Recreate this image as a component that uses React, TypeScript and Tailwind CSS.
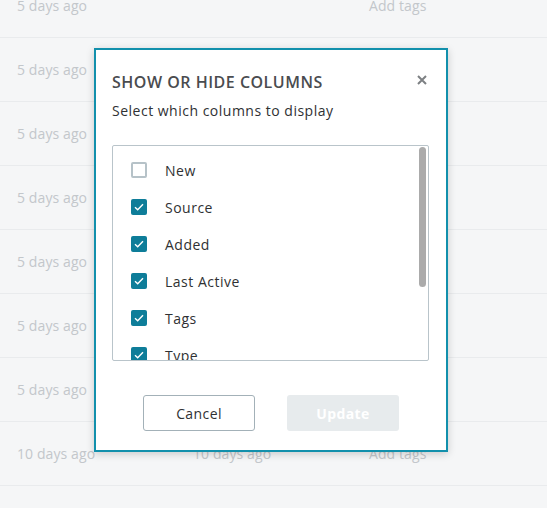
const ROWS = [
  ["5 days ago", "", "Add tags"],
  ["5 days ago", "", ""],
  ["5 days ago", "", ""],
  ["5 days ago", "", ""],
  ["5 days ago", "", ""],
  ["5 days ago", "", ""],
  ["5 days ago", "", ""],
  ["10 days ago", "10 days ago", "Add tags"],
  ["", "", ""],
];

const COLUMNS = [
  { label: "New", checked: false },
  { label: "Source", checked: true },
  { label: "Added", checked: true },
  { label: "Last Active", checked: true },
  { label: "Tags", checked: true },
  { label: "Type", checked: true },
];

function Checkbox({ checked }: { checked: boolean }) {
  if (!checked) {
    return (
      <span className="w-4 h-4 shrink-0 rounded-[2px] border-2 border-[#b6c2c8] bg-white" />
    );
  }
  return (
    <span className="w-4 h-4 shrink-0 rounded-[2px] bg-[#0e7d99] flex items-center justify-center">
      <svg width="10" height="8" viewBox="0 0 10 8" fill="none">
        <path d="M1 4.2 L3.7 6.8 L9 1.2" stroke="white" strokeWidth="1.4" />
      </svg>
    </span>
  );
}

export default function App() {
  return (
    <div
      className="relative w-[547px] h-[508px] overflow-hidden bg-[#f5f6f7]"
      style={{ fontFamily: "'Open Sans', Lato, sans-serif" }}
    >
      <div className="-mt-[26px]">
        {ROWS.map((row, i) => (
          <div
            key={i}
            className="h-16 border-b border-[#e9ebed] flex items-center text-[14px] tracking-[0.1px] text-[#c3c7cb]"
          >
            <span className="w-[193px] pl-[17px]">{row[0]}</span>
            <span className="w-[176px]">{row[1]}</span>
            <span>{row[2]}</span>
          </div>
        ))}
      </div>

      <div className="absolute left-[94px] top-[48px] w-[354px] h-[404px] bg-white border-2 border-[#1290ac] shadow-[0_2px_8px_rgba(0,0,0,0.18)] flex flex-col px-[16px]">
        <div className="flex items-start justify-between pt-[20px]">
          <h2 className="text-[16px] leading-[24px] font-semibold tracking-[0.5px] text-[#4a4c4f]">
            SHOW OR HIDE COLUMNS
          </h2>
          <button className="mt-[5px] mr-[3px] text-[#7d8083]">
            <svg width="10" height="10" viewBox="0 0 10 10">
              <path d="M1 1 L9 9 M9 1 L1 9" stroke="currentColor" strokeWidth="2" />
            </svg>
          </button>
        </div>
        <p className="mt-[6px] text-[14px] leading-[21px] tracking-[0.5px] text-[#2f3133]">
          Select which columns to display
        </p>

        <div className="relative mt-[24px] mr-[1px] h-[216px] border border-[#b9c4ca] rounded-[2px] overflow-hidden">
          <div className="flex flex-col gap-[21px] pt-[16px] pl-[18px]">
            {COLUMNS.map((c) => (
              <label key={c.label} className="flex items-center gap-[18px] h-4">
                <Checkbox checked={c.checked} />
                <span className="text-[14px] tracking-[0.5px] text-[#2f3133]">{c.label}</span>
              </label>
            ))}
          </div>
          <div className="absolute right-[2px] top-[1px] w-[7px] h-[140px] rounded-full bg-[#ababab]" />
        </div>

        <div className="flex justify-center gap-[32px] mt-[34px]">
          <button className="w-[112px] h-[36px] border border-[#a3b1b8] rounded-[3px] text-[14px] tracking-[0.4px] text-[#2f3133] bg-white">
            Cancel
          </button>
          <button className="w-[112px] h-[36px] rounded-[3px] text-[14px] tracking-[0.4px] font-bold text-white bg-[#e7ebed]">
            Update
          </button>
        </div>
      </div>
    </div>
  );
}
